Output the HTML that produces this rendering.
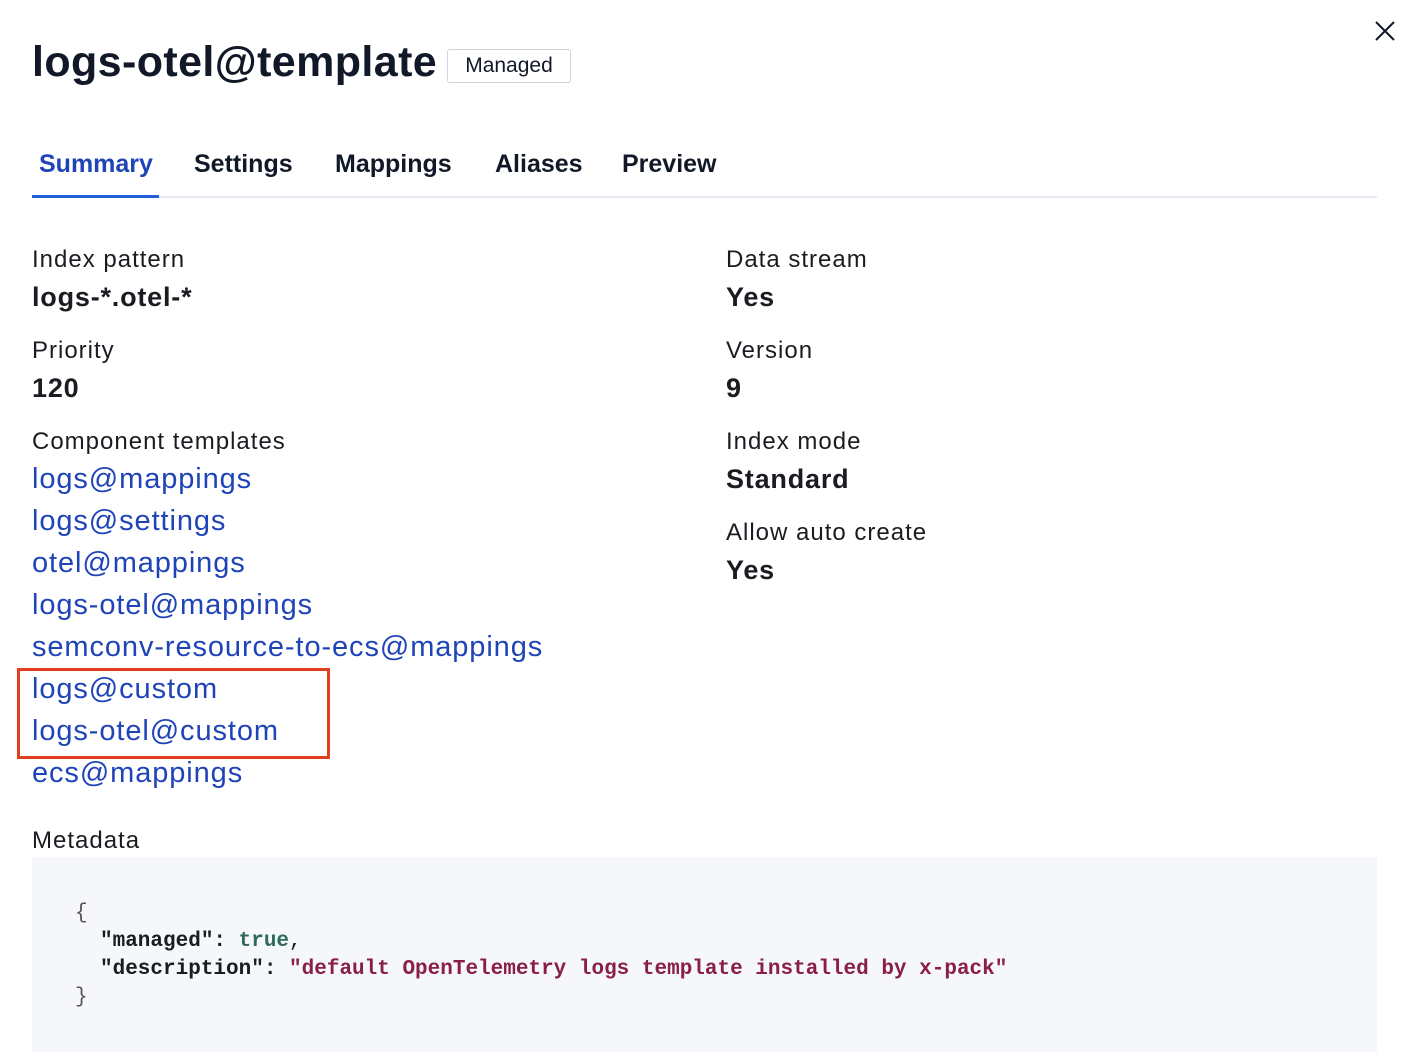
<!DOCTYPE html>
<html><head><meta charset="utf-8"><style>
body{margin:0;width:1404px;height:1061px;background:#fff;position:relative;overflow:hidden;font-family:"Liberation Sans",sans-serif;color:#111827}
.a{position:absolute;white-space:nowrap;line-height:1}
.lbl{font-size:24px;color:#1a1c21;letter-spacing:1px}
.val{font-size:27px;font-weight:bold;color:#1a1c21;letter-spacing:0.8px}
.lnk{font-size:29px;color:#1f44b8;letter-spacing:0.9px}
.tab{font-size:25px;font-weight:bold;top:152px}
.mono{font-family:"Liberation Mono",monospace;font-size:21px;letter-spacing:0;font-weight:bold;color:#1a1c21}
</style></head><body>
<div class="a" style="left:32px;top:41px;font-size:43px;font-weight:bold;letter-spacing:0.4px">logs-otel@template</div>
<div class="a" style="left:447px;top:49px;width:122px;height:32px;border:1px solid #cdd3df;border-radius:3px;font-size:21px;line-height:32px;text-align:center">Managed</div>
<svg class="a" style="left:1374px;top:20px" width="22" height="22" viewBox="0 0 22 22"><path d="M2 2L20 20M20 2L2 20" stroke="#111827" stroke-width="2"/></svg>

<div class="a tab" style="left:39px;color:#1f44b8">Summary</div>
<div class="a tab" style="left:194px">Settings</div>
<div class="a tab" style="left:335px">Mappings</div>
<div class="a tab" style="left:495px">Aliases</div>
<div class="a tab" style="left:622px">Preview</div>
<div class="a" style="left:32px;top:196px;width:1345px;height:2px;background:#e3e8f2"></div>
<div class="a" style="left:32px;top:195px;width:127px;height:3px;background:#1f5fd8"></div>

<div class="a lbl" style="left:32px;top:248px">Index pattern</div>
<div class="a val" style="left:32px;top:284px">logs-*.otel-*</div>
<div class="a lbl" style="left:32px;top:339px">Priority</div>
<div class="a val" style="left:32px;top:375px">120</div>
<div class="a lbl" style="left:32px;top:430px">Component templates</div>
<div class="a lnk" style="left:32px;top:465px">logs@mappings</div>
<div class="a lnk" style="left:32px;top:507px">logs@settings</div>
<div class="a lnk" style="left:32px;top:549px">otel@mappings</div>
<div class="a lnk" style="left:32px;top:591px">logs-otel@mappings</div>
<div class="a lnk" style="left:32px;top:633px">semconv-resource-to-ecs@mappings</div>
<div class="a lnk" style="left:32px;top:675px">logs@custom</div>
<div class="a lnk" style="left:32px;top:717px">logs-otel@custom</div>
<div class="a lnk" style="left:32px;top:759px">ecs@mappings</div>
<div class="a" style="left:17px;top:668px;width:307px;height:85px;border:3px solid #e0401f"></div>

<div class="a lbl" style="left:726px;top:248px">Data stream</div>
<div class="a val" style="left:726px;top:284px">Yes</div>
<div class="a lbl" style="left:726px;top:339px">Version</div>
<div class="a val" style="left:726px;top:375px">9</div>
<div class="a lbl" style="left:726px;top:430px">Index mode</div>
<div class="a val" style="left:726px;top:466px">Standard</div>
<div class="a lbl" style="left:726px;top:521px">Allow auto create</div>
<div class="a val" style="left:726px;top:557px">Yes</div>

<div class="a lbl" style="left:32px;top:829px">Metadata</div>
<div class="a" style="left:32px;top:857px;width:1345px;height:195px;background:#f5f7fa"></div>
<div class="a mono" style="left:75px;top:903px;font-weight:normal;color:#555">{</div>
<div class="a mono" style="left:100px;top:931px">"managed": <span style="color:#2f6b5d">true</span><span style="font-weight:normal">,</span></div>
<div class="a mono" style="left:100px;top:959px">"description": <span style="color:#8a1e4b">"default OpenTelemetry logs template installed by x-pack"</span></div>
<div class="a mono" style="left:75px;top:987px;font-weight:normal;color:#555">}</div>
</body></html>
